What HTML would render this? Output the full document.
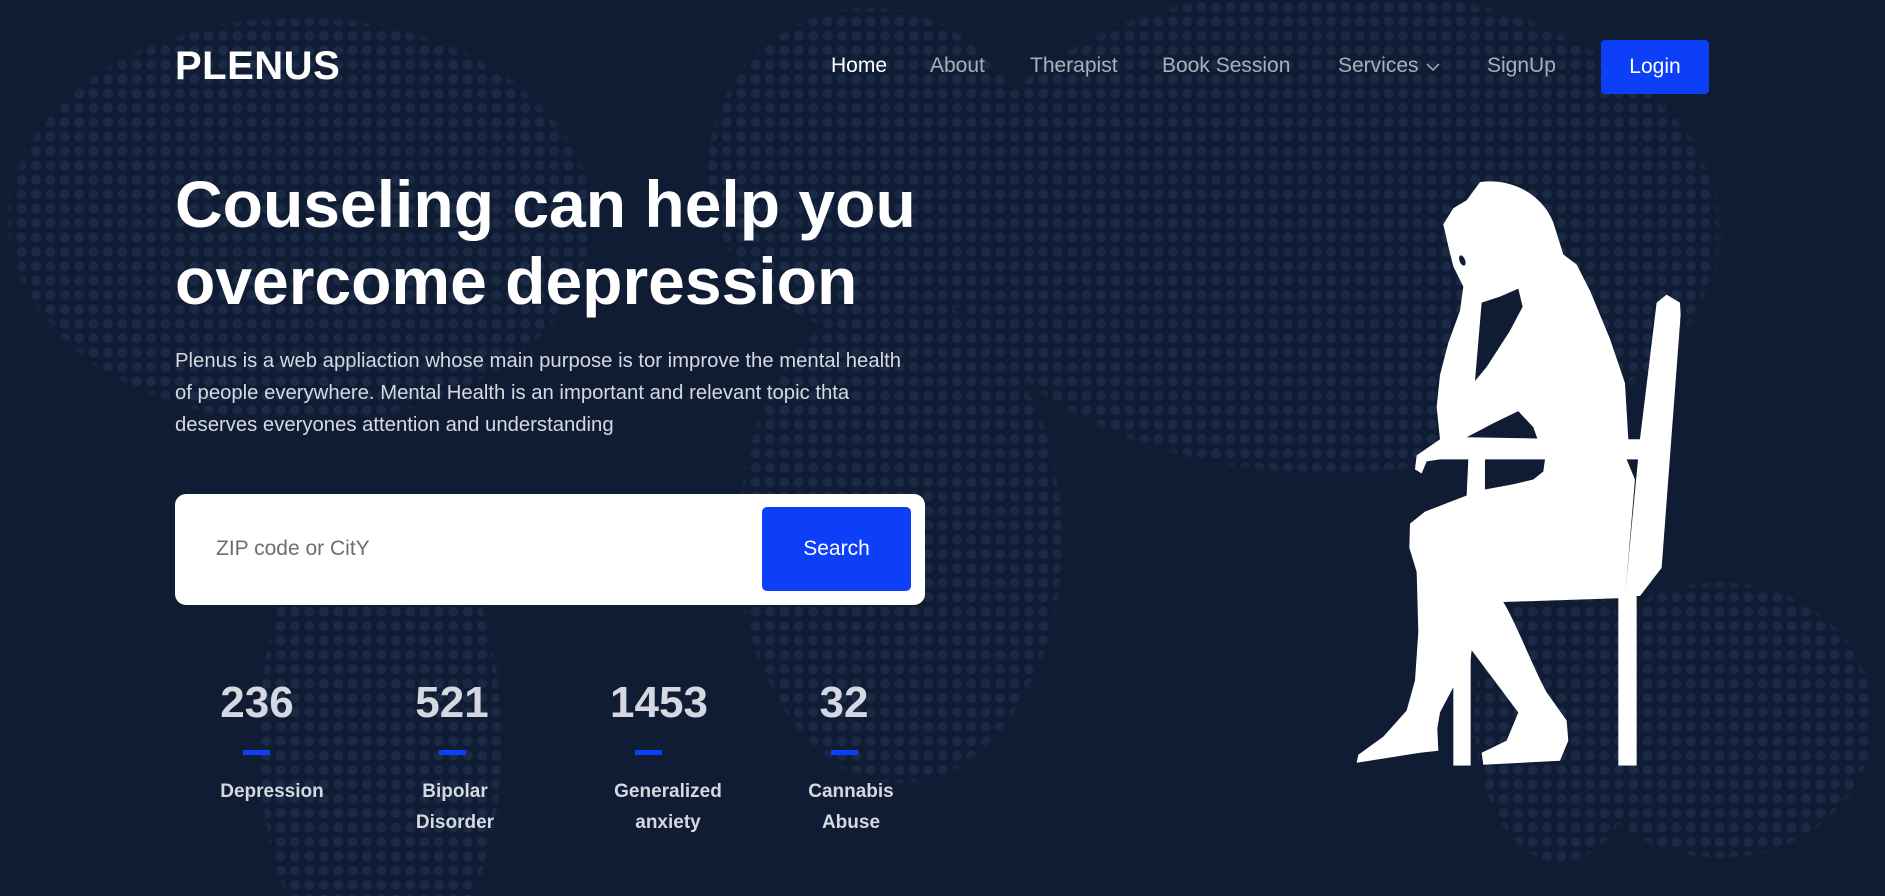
<!DOCTYPE html>
<html><head><meta charset="utf-8"><style>
*{margin:0;padding:0;box-sizing:border-box}
body{width:1885px;height:896px;overflow:hidden;background:#0f1c34;font-family:"Liberation Sans",Arial,sans-serif;position:relative}
.dots{position:absolute;inset:0;background-image:radial-gradient(circle,#1b2a44 4.6px,transparent 5.3px);background-size:14.4px 14.4px;
-webkit-mask-image:radial-gradient(ellipse 360px 250px at 300px 220px,#000 80%,transparent 82%),radial-gradient(ellipse 150px 300px at 380px 740px,#000 80%,transparent 82%),radial-gradient(ellipse 200px 300px at 900px 540px,#000 80%,transparent 82%),radial-gradient(ellipse 200px 200px at 870px 170px,#000 80%,transparent 82%),radial-gradient(ellipse 480px 300px at 1330px 230px,#000 80%,transparent 82%),radial-gradient(ellipse 190px 170px at 1720px 720px,#000 80%,transparent 82%),radial-gradient(ellipse 120px 200px at 1560px 720px,#000 70%,transparent 72%);
mask-image:radial-gradient(ellipse 360px 250px at 300px 220px,#000 80%,transparent 82%),radial-gradient(ellipse 150px 300px at 380px 740px,#000 80%,transparent 82%),radial-gradient(ellipse 200px 300px at 900px 540px,#000 80%,transparent 82%),radial-gradient(ellipse 200px 200px at 870px 170px,#000 80%,transparent 82%),radial-gradient(ellipse 480px 300px at 1330px 230px,#000 80%,transparent 82%),radial-gradient(ellipse 190px 170px at 1720px 720px,#000 80%,transparent 82%),radial-gradient(ellipse 120px 200px at 1560px 720px,#000 70%,transparent 72%)}
.a{position:absolute;white-space:nowrap}
.logo{left:175px;top:44px;font-size:40px;font-weight:bold;color:#fff;letter-spacing:0.5px}
.nav{top:54px;font-size:21px;color:#a9afbb}
.login{left:1601px;top:40px;width:108px;height:54px;background:#0d3ff9;border-radius:4px;color:#fff;font-size:21px;text-align:center;line-height:54px}
h1{position:absolute;left:175px;top:166px;font-size:66px;line-height:77px;color:#fff;font-weight:bold}
p.d{position:absolute;left:175px;top:345px;width:745px;font-size:20.3px;line-height:32px;color:#d6d9e0}
.box{position:absolute;left:175px;top:494px;width:750px;height:111px;background:#fff;border-radius:11px}
.ph{left:216px;top:537px;font-size:21px;color:#6b6e75}
.btn{position:absolute;left:762px;top:507px;width:149px;height:84px;background:#0d3ff9;border-radius:5px;color:#fff;font-size:21px;text-align:center;line-height:84px}
.num{top:678px;font-size:44px;font-weight:bold;color:#d5d8e0;width:200px;text-align:center}
.dash{position:absolute;top:750px;width:27px;height:5px;background:#0d3ff9}
.lab{top:776px;font-size:19px;font-weight:bold;color:#d5d8e0;width:200px;text-align:center;line-height:31px}
</style></head><body>
<div class="dots"></div>
<div class="a logo">PLENUS</div>
<div class="a nav" style="left:831px;color:#fff">Home</div>
<div class="a nav" style="left:930px">About</div>
<div class="a nav" style="left:1030px">Therapist</div>
<div class="a nav" style="left:1162px">Book Session</div>
<div class="a nav" style="left:1338px">Services <svg width="14" height="10" viewBox="0 0 14 10" style="margin-left:2px"><path d="M1 2 L7 8 L13 2" fill="none" stroke="#a9afbb" stroke-width="1.5"/></svg></div>
<div class="a nav" style="left:1487px">SignUp</div>
<div class="a login">Login</div>
<h1>Couseling can help you<br>overcome depression</h1>
<p class="d">Plenus is a web appliaction whose main purpose is tor improve the mental health of people everywhere. Mental Health is an important and relevant topic thta deserves everyones attention and understanding</p>
<div class="box"></div>
<div class="a ph">ZIP code or CitY</div>
<div class="btn">Search</div>
<div class="a num" style="left:157px">236</div>
<div class="a num" style="left:352px">521</div>
<div class="a num" style="left:559px">1453</div>
<div class="a num" style="left:744px">32</div>
<div class="dash" style="left:243px"></div>
<div class="dash" style="left:439px"></div>
<div class="dash" style="left:635px"></div>
<div class="dash" style="left:831px"></div>
<div class="a lab" style="left:172px">Depression</div>
<div class="a lab" style="left:355px">Bipolar<br>Disorder</div>
<div class="a lab" style="left:568px">Generalized<br>anxiety</div>
<div class="a lab" style="left:751px">Cannabis<br>Abuse</div>
<svg style="position:absolute;left:0;top:0" width="1885" height="896">
<g transform="translate(1300,150) scale(0.3333,0.4018)">
<g fill="#fff">
<path d="M1070,380 L1100,360 L1140,380 L1142,410 L1085,1040 L1020,1110 L975,1110 L1020,720 Z"/>
<rect x="955" y="1100" width="55" height="432"/>
<rect x="460" y="1100" width="52" height="432"/>
<path d="M540,80 C620,70 720,100 760,180 L790,260 L830,285 L870,350 L930,470 L975,580 L985,720 L1020,720 L1020,770 L980,770 L1005,820 L975,1115 L610,1125 C650,1180 700,1290 740,1350 L800,1420 L805,1470 L780,1520 L550,1530 L545,1500 L620,1470 L655,1400 L515,1245 L505,1320 L458,1340 L420,1400 L412,1440 L415,1495 L360,1500 L170,1525 L175,1505 L250,1460 L320,1395 L345,1320 L355,1200 L350,1050 L328,990 L330,930 L375,900 L500,860 L505,770 L420,770 L380,775 L365,805 L345,795 L350,760 L420,720 L410,640 L420,560 L445,480 L480,400 L490,340 L460,290 L445,240 L430,185 L460,145 L500,125 Z"/>
</g>
<g fill="#0f1c34">
<path d="M525,575 L545,380 L600,365 L655,345 L668,390 L630,450 L560,540 Z"/>
<ellipse cx="487" cy="275" rx="8" ry="14" transform="rotate(-30 487 275)"/>
<path d="M500,715 L580,680 L655,650 L700,690 L712,718 Z"/>
<path d="M555,770 L735,770 L730,800 L700,820 L640,832 L555,845 Z"/>
</g>
</g>
</svg>
</body></html>
